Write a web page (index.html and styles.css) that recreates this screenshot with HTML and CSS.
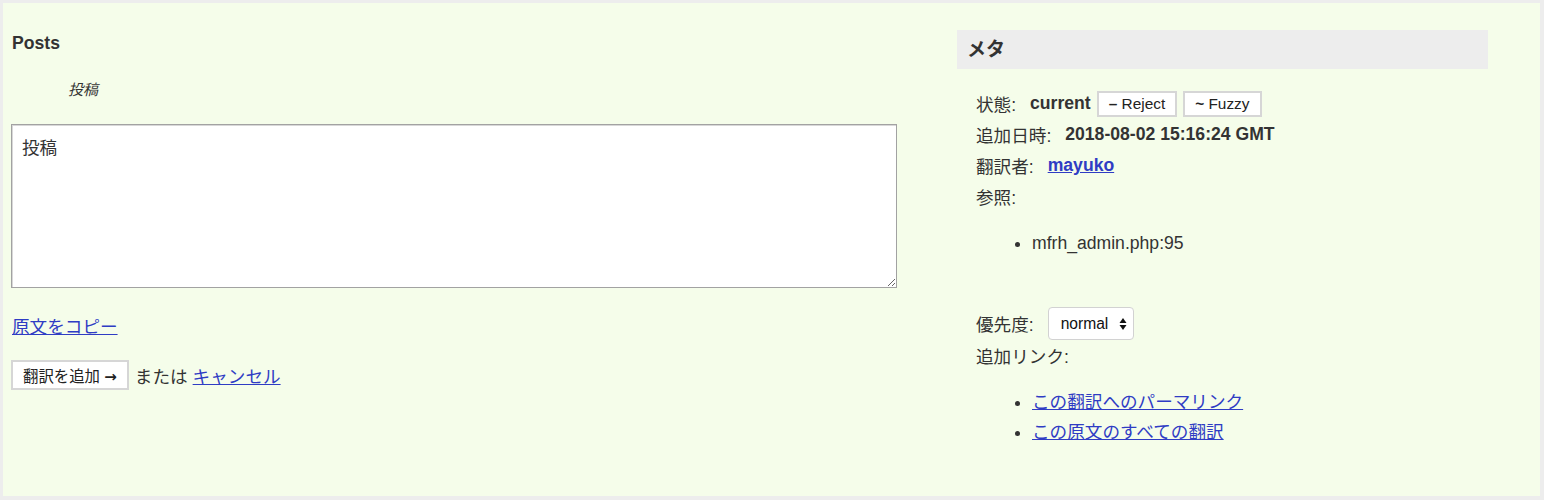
FILE: index.html
```html
<!DOCTYPE html>
<html>
<head>
  <meta charset="utf-8">
  <title>翻訳の編集</title>
  <link rel="stylesheet" href="styles.css">
</head>
<body>
  <div class="editor">
    <div class="editor-panel">

      <!-- Strings -->
      <div class="strings">
        <h3 class="context">Posts</h3>
        <p class="original"><em>投稿</em></p>
        <textarea class="translation" rows="6">投稿</textarea>
        <p class="copy"><a href="#">原文をコピー</a></p>
        <div class="actions">
          <button class="add-btn">翻訳を追加 <span class="arrow">→</span></button>
          <span class="or">または</span>
          <a href="#">キャンセル</a>
        </div>
      </div>

      <!-- Meta -->
      <div class="meta">
        <h3 class="meta-title">メタ</h3>
        <div class="meta-body">
          <div class="row">
            <span class="label">状態:</span>
            <strong>current</strong>
            <button class="state-btn"><b>–</b> Reject</button>
            <button class="state-btn"><b>~</b> Fuzzy</button>
          </div>
          <div class="row">
            <span class="label">追加日時:</span>
            <strong>2018-08-02 15:16:24 GMT</strong>
          </div>
          <div class="row">
            <span class="label">翻訳者:</span>
            <a href="#" class="user">mayuko</a>
          </div>
          <div class="row">
            <span class="label">参照:</span>
          </div>
          <ul class="refs">
            <li>mfrh_admin.php:95</li>
          </ul>
          <div class="row priority">
            <span class="label">優先度:</span>
            <span class="select-wrap">
              <select>
                <option>normal</option>
                <option>high</option>
                <option>low</option>
              </select>
              <svg class="arrows" width="8" height="14" viewBox="0 0 8 14">
                <path d="M4 1 L7.5 6 L0.5 6 Z" fill="#111"/>
                <path d="M4 13 L7.5 8 L0.5 8 Z" fill="#111"/>
              </svg>
            </span>
          </div>
          <div class="row">
            <span class="label">追加リンク:</span>
          </div>
          <ul class="links">
            <li><a href="#">この翻訳へのパーマリンク</a></li>
            <li><a href="#">この原文のすべての翻訳</a></li>
          </ul>
        </div>
      </div>

    </div>
  </div>
</body>
</html>
```

FILE: styles.css
```css
body {
  margin: 0;
  background-color: #ededed;
  font-family: "Liberation Sans", "Noto Sans CJK JP", sans-serif;
  font-size: 17.6px;
  color: #333;
}

a {
  color: #2f3cc4;
}

.editor {
  margin: 3px 4px 4px 3px;
  height: 493px;
  background-color: #f5fdea;
}

.editor-panel {
  display: flex;
  padding-top: 27px;
}

/* left column */
.strings {
  width: 886px;
  margin-left: 8px;
}

.context {
  margin: 1px 0 0 1px;
  font-size: 17.6px;
  line-height: 24px;
}

.original {
  margin: 23px 0 0 57px;
  font-size: 15px;
  line-height: 24px;
}

.translation {
  display: block;
  box-sizing: border-box;
  width: 886px;
  height: 164px;
  margin-top: 22px;
  padding: 11px 10px;
  border: 1px solid #a2a2a2;
  box-shadow: inset 1px 1px 0 #d8d8d8;
  background-color: #fff;
  font-family: inherit;
  font-size: 17.6px;
  line-height: 24px;
  color: #333;
}

.copy {
  margin: 27px 0 0 1px;
  line-height: 24px;
}

.actions {
  display: flex;
  align-items: center;
  margin-top: 21px;
}

.add-btn {
  height: 30px;
  padding: 0 10px;
  background-color: #fff;
  border: 2px solid #d6d6d6;
  font-family: inherit;
  font-size: 15.4px;
  color: #222;
}

.arrow {
  font-family: "DejaVu Sans", sans-serif;
  font-size: 15px;
  font-weight: bold;
}

.or {
  margin: 0 5px 0 6px;
}

/* right column */
.meta {
  width: 531px;
  margin-left: 60px;
}

.meta-title {
  margin: 0;
  height: 39px;
  padding-left: 10px;
  background-color: #ededed;
  font-size: 19px;
  line-height: 39px;
}

.meta-body {
  padding: 19px 0 0 19px;
}

.row {
  display: flex;
  align-items: center;
  height: 31px;
}

.label {
  margin-right: 14px;
}

.user {
  font-weight: bold;
}

.state-btn {
  height: 26px;
  margin-left: 6px;
  padding: 0 10px;
  background-color: #fff;
  border: 2px solid #d6d6d6;
  font-family: inherit;
  font-size: 15.4px;
  color: #222;
}

.refs {
  margin: 16px 0 0;
  padding-left: 56px;
  line-height: 31px;
}

.priority {
  height: 33px;
  margin-top: 48px;
}

.select-wrap {
  position: relative;
  display: inline-block;
}

.select-wrap select {
  -webkit-appearance: none;
  appearance: none;
  width: 86px;
  height: 33px;
  padding: 0 0 0 12px;
  background-color: #fff;
  border: 1px solid #d2d2d2;
  border-radius: 4px;
  font-family: inherit;
  font-size: 15.6px;
  color: #111;
}

.arrows {
  position: absolute;
  right: 7px;
  top: 10px;
  pointer-events: none;
}

.links {
  margin: 16px 0 0;
  padding-left: 56px;
  line-height: 30px;
}
```
